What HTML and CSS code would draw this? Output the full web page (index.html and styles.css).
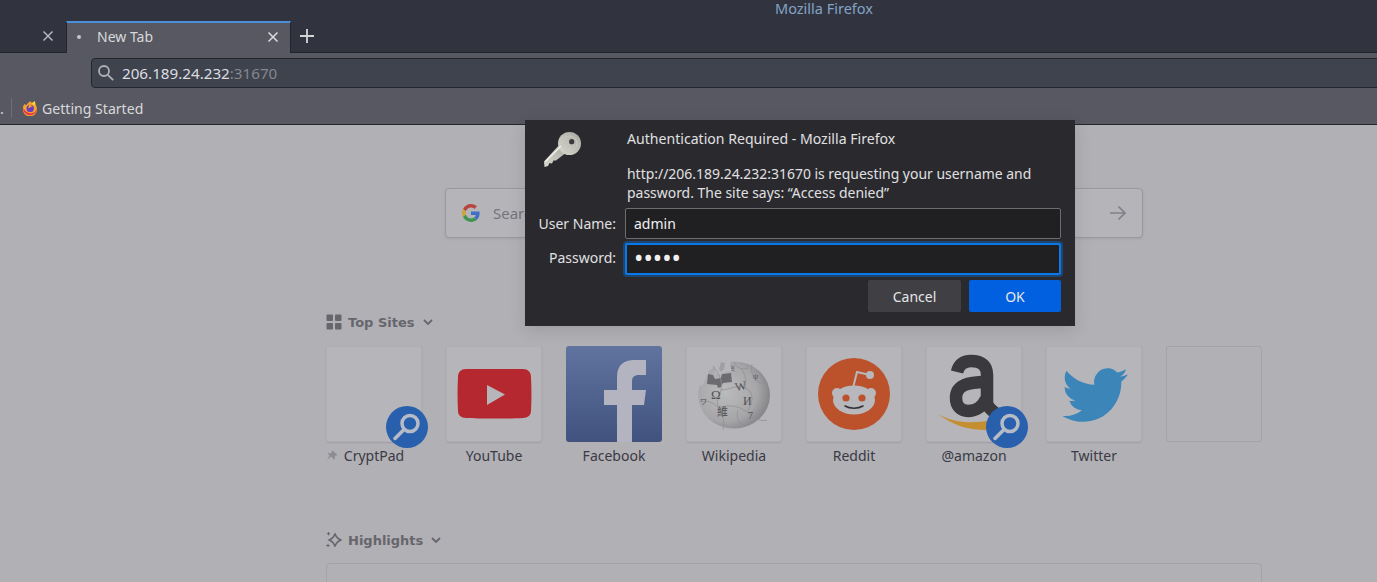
FILE: index.html
```html
<!DOCTYPE html>
<html lang="en">
<head>
<meta charset="utf-8">
<title>Mozilla Firefox</title>
<link rel="stylesheet" href="styles.css">
</head>
<body>
<div class="chrome">
  <div class="titlebar"><span class="title">Mozilla Firefox</span></div>
  <div class="tabstrip">
    <div class="tab-old">
      <svg class="x" viewBox="0 0 12 12"><path d="M1.500 1.500l9 9M10.500 1.500l-9 9"/></svg>
    </div>
    <div class="tab-active">
      <span class="tab-dot"></span>
      <span class="tab-label">New Tab</span>
      <svg class="x x-light" viewBox="0 0 12 12"><path d="M1.500 1.500l9 9M10.500 1.500l-9 9"/></svg>
    </div>
    <svg class="plus" viewBox="0 0 14 14"><path d="M7 0v14M0 7h14"/></svg>
  </div>
  <div class="navbar">
    <div class="urlbar">
      <svg class="url-search" viewBox="0 0 16 16"><circle cx="6" cy="6" r="5"/><path d="M9.800 9.800l5.400 5.400"/></svg>
      <span class="url-host">206.189.24.232</span><span class="url-port">:31670</span>
    </div>
  </div>
  <div class="bookmarks">
    <span class="bm-more">.</span>
    <span class="bm-sep"></span>
    <svg class="ff-icon" viewBox="0 0 16 16">
      <path d="M8 1.200c1.200.4 1.500 1.300 1.800 1.800 1-.3 2.200-.8 2.400-2 .8 1 1.200 2.200 1.100 3 .9 1.200 1.500 2.500 1.500 4.200A7 7 0 1 1 1 8.200c0-1.600.5-3 1.500-4.100C3 4.800 3.700 5 4.500 5 5.200 3.500 6.500 2.800 8 1.200z" fill="#f7a327"/>
      <path d="M1 8.200a7 7 0 0 0 14 0c-.6 2.500-2.300 5-6 5-3.500 0-5.500-2-8-5z" fill="#e8344e"/>
      <path d="M12.200 1c.8 1 1.200 2.200 1.100 3l-1.500 1.500-2-2.500c1-.3 2.200-.8 2.400-2z" fill="#ffd83a"/>
      <circle cx="8.200" cy="8.400" r="3.700" fill="#6a3cc4"/>
      <path d="M6.500 5.200c1.800-.6 3.400.2 4.200 1.400-1 .1-2 .3-2.500 1-.4.5-1.200.6-2 .3.600-.8.600-1.700.3-2.700z" fill="#f7a327"/>
    </svg>
    <span class="bm-label">Getting Started</span>
  </div>
</div>

<main class="page">
  <div class="search">
    <svg class="g-icon" viewBox="0 0 48 48">
      <path fill="#b7453b" d="M24 9.500c3.900 0 6.900 1.600 9.100 3.600l6.800-6.800C35.900 2.500 30.500 0 24 0 14.600 0 6.500 5.400 2.600 13.200l7.900 6.200C12.400 13.600 17.700 9.500 24 9.500z"/>
      <path fill="#3f6fc4" d="M46.900 24.500c0-1.600-.1-3.100-.4-4.500H24v9h12.900c-.6 3-2.200 5.500-4.800 7.200l7.700 6C44.300 37.900 46.900 31.800 46.900 24.500z"/>
      <path fill="#cda33a" d="M10.500 28.600c-.5-1.400-.8-3-.8-4.600s.3-3.200.8-4.600l-7.900-6.200C.9 16.500 0 20.100 0 24s.9 7.500 2.600 10.800l7.900-6.200z"/>
      <path fill="#3f9450" d="M24 48c6.500 0 11.900-2.100 15.800-5.800l-7.700-6c-2.100 1.400-4.900 2.300-8.100 2.300-6.300 0-11.600-4.100-13.500-9.900l-7.900 6.200C6.500 42.600 14.600 48 24 48z"/>
    </svg>
    <span class="search-text">Search</span>
    <svg class="arrow" viewBox="0 0 18 16"><path d="M1 8h15M9.500 1.500L16 8l-6.500 6.500"/></svg>
  </div>

  <div class="section-head head-top">
    <svg class="head-icon" viewBox="0 0 16 16"><rect x="0.500" y="0.500" width="6.500" height="6.500" rx="1"/><rect x="9" y="0.500" width="6.500" height="6.500" rx="1"/><rect x="0.500" y="9" width="6.500" height="6.500" rx="1"/><rect x="9" y="9" width="6.500" height="6.500" rx="1"/></svg>
    <span class="head-label">Top Sites</span>
    <svg class="chev" viewBox="0 0 10 6"><path d="M1 1l4 4 4-4"/></svg>
  </div>

  <div class="sites">
    <div class="site">
      <div class="tile">
        <svg class="badge" viewBox="0 0 42 42"><circle cx="21" cy="21" r="21" fill="#2860ae"/><circle cx="24" cy="17.500" r="8" fill="none" stroke="#b7bbc6" stroke-width="3.500"/><path d="M18 23.500L9 32.500" stroke="#b7bbc6" stroke-width="3.500" stroke-linecap="round"/></svg>
      </div>
      <div class="site-label"><svg class="pin" viewBox="0 0 12 12"><path d="M6.500.5l5 4.500-2.500 1-.5 4-3.500-3.500L1 10l2.500-4.500L1.500 3l3.500.2z"/></svg>CryptPad</div>
    </div>
    <div class="site">
      <div class="tile">
        <svg class="tile-art" viewBox="0 0 96 96">
          <path d="M20 23h57c5 0 8 3 8 8 .6 12 .6 22 0 34 0 4-3 7-8 7-17 .8-43 .8-57 0-5 0-8-3-8-7-.6-12-.6-22 0-34 0-5 3-8 8-8z" fill="#b6282f"/>
          <path d="M41 39l18 9.500L41 59z" fill="#b6b5ba"/>
        </svg>
      </div>
      <div class="site-label">YouTube</div>
    </div>
    <div class="site">
      <div class="tile tile-fb">
        <svg class="tile-art" viewBox="0 0 96 96">
          <path d="M51 96V59H38V44h13V31c0-12 7-17 17-17h12v15h-7c-5 0-7 2-7 7v8h14l-2 15H66v37z" fill="#b3b4c0"/>
        </svg>
      </div>
      <div class="site-label">Facebook</div>
    </div>
    <div class="site">
      <div class="tile">
        <svg class="tile-art" viewBox="0 0 96 96">
          <defs>
            <radialGradient id="globe" cx="0.380" cy="0.450" r="0.680">
              <stop offset="0" stop-color="#bbbbbd"/><stop offset="0.650" stop-color="#a6a6a9"/><stop offset="1" stop-color="#7c7c80"/>
            </radialGradient>
          </defs>
          <ellipse cx="48" cy="49" rx="36" ry="33.500" fill="url(#globe)"/>
          <path d="M29 12h15l1 13-6 1-2 3-8-1z" fill="#b6b5ba"/>
          <path d="M12 38l6-14 5 2-4 8-3 6z" fill="#b6b5ba"/>
          <path d="M35 16l4 1-1 6-3 3-2-3z" fill="#a0a0a3"/>
          <path d="M22 28l5 1 2 4 6-1 1-4 9-1 1 9-9 1-2 4-3 1-1-3-10-1z" fill="#6c6c70"/>
          <g class="puzzle"><path d="M27 20c6 8 10 14 8 24s-6 10-2 18 6 14 4 22M33 62c10-4 20-2 28 4s12 10 20 8M35 44c10 0 14-6 24-2s8 14 2 24M59 42c2-8 0-14-4-20M48 16c2 6 8 8 14 6M66 18c-2 10 2 16 10 20M15 56c6-2 12 0 18 6M52 64c-2 6 0 12 4 15"/></g>
          <text class="glyph" x="25" y="53" font-size="13">Ω</text>
          <text class="glyph" x="49" y="44" font-size="12" transform="rotate(-12 56 40)">W</text>
          <text class="glyph" x="57" y="59" font-size="12">И</text>
          <text class="glyph" x="31" y="70" font-size="11">維</text>
          <text class="glyph" x="62" y="73" font-size="10">7</text>
          <text class="glyph" x="67" y="33" font-size="8">ψ</text>
          <text class="glyph" x="45" y="25" font-size="7">ই</text>
          <text class="glyph" x="14" y="58" font-size="7">ワ</text>
        </svg>
      </div>
      <div class="site-label">Wikipedia</div>
    </div>
    <div class="site">
      <div class="tile">
        <svg class="tile-art" viewBox="0 0 96 96">
          <circle cx="48" cy="48" r="36" fill="#bc522b"/>
          <path d="M47 42l4-16 13 3" fill="none" stroke="#b7b7bc" stroke-width="2"/>
          <circle cx="64" cy="29" r="4" fill="#b7b7bc"/>
          <circle cx="31" cy="47" r="5" fill="#b7b7bc"/>
          <circle cx="65" cy="47" r="5" fill="#b7b7bc"/>
          <ellipse cx="48" cy="54" rx="21" ry="14.500" fill="#b7b7bc"/>
          <circle cx="40" cy="52" r="3.600" fill="#bc522b"/>
          <circle cx="56" cy="52" r="3.600" fill="#bc522b"/>
          <path d="M39 60c5 3 13 3 18 0" fill="none" stroke="#333338" stroke-width="1.600" stroke-linecap="round"/>
        </svg>
      </div>
      <div class="site-label">Reddit</div>
    </div>
    <div class="site">
      <div class="tile">
        <svg class="tile-art" viewBox="0 0 96 96">
          <path d="M12 68c14 11 32 17 52 16l8-4-3-7c-18 5-40 5-57-5z" fill="#c48f30"/>
          <path d="M31 26c2-8 7-11 14-11 11 0 16 5 16 14v27c0 4 3 7 8 11" fill="none" stroke="#3a3a3e" stroke-width="12.500"/>
          <path d="M60 36c-18 0-30 3-30 16 0 8 5 13 12 13 8 0 15-5 18-12" fill="none" stroke="#3a3a3e" stroke-width="12.500"/>
        </svg>
        <svg class="badge" viewBox="0 0 42 42"><circle cx="21" cy="21" r="21" fill="#2860ae"/><circle cx="24" cy="17.500" r="8" fill="none" stroke="#b7bbc6" stroke-width="3.500"/><path d="M18 23.500L9 32.500" stroke="#b7bbc6" stroke-width="3.500" stroke-linecap="round"/></svg>
      </div>
      <div class="site-label">@amazon</div>
    </div>
    <div class="site">
      <div class="tile">
        <svg class="tile-bird" viewBox="0 0 24 24"><path fill="#3b85b9" d="M23.953 4.570a10 10 0 0 1-2.825.775 4.958 4.958 0 0 0 2.163-2.723c-.951.555-2.005.959-3.127 1.184a4.920 4.920 0 0 0-8.384 4.482C7.690 8.095 4.067 6.130 1.640 3.162a4.822 4.822 0 0 0-.666 2.475c0 1.710.870 3.213 2.188 4.096a4.904 4.904 0 0 1-2.228-.616v.060a4.923 4.923 0 0 0 3.946 4.827 4.996 4.996 0 0 1-2.212.085 4.936 4.936 0 0 0 4.604 3.417 9.867 9.867 0 0 1-6.102 2.105c-.390 0-.779-.023-1.170-.067a13.995 13.995 0 0 0 7.557 2.209c9.053 0 13.998-7.496 13.998-13.985 0-.210 0-.420-.015-.630A9.935 9.935 0 0 0 24 4.590z"/></svg>
      </div>
      <div class="site-label">Twitter</div>
    </div>
    <div class="site">
      <div class="tile tile-empty"></div>
    </div>
  </div>

  <div class="section-head head-high">
    <svg class="head-icon" viewBox="0 0 16 16"><path class="spark" d="M9 1.500c.7 3.300 2 4.700 5.800 6.500-3.800 1.800-5.100 3.200-5.800 6.500-.7-3.300-2-4.700-5.800-6.500C7 6.200 8.300 4.800 9 1.500z"/><path class="spark-dot" d="M2.500 0v3.400M.8 1.700h3.400M2 11.800v3.400M.3 13.500h3.400"/></svg>
    <span class="head-label">Highlights</span>
    <svg class="chev" viewBox="0 0 10 6"><path d="M1 1l4 4 4-4"/></svg>
  </div>
  <div class="highlights"></div>
</main>

<div class="dialog">
  <svg class="key" viewBox="0 0 40 38">
    <defs><linearGradient id="keyfill" x1="0" y1="1" x2="1" y2="0"><stop offset="0" stop-color="#d8d8cf"/><stop offset="1" stop-color="#a9a9a1"/></linearGradient></defs>
    <path d="M17 12L1 29.500l.5 5.500 3.500-1 1.500-3 2.500.5 1.500-3 2.500 0L24 20z" fill="url(#keyfill)"/>
    <circle cx="26.500" cy="11.500" r="11.500" fill="url(#keyfill)"/>
    <circle cx="26.500" cy="11.500" r="7.500" fill="none" stroke="#c9c9c1" stroke-width="1"/>
    <circle cx="28.700" cy="9.700" r="2.600" fill="#3a3a3c"/>
    <path d="M2.500 29.500L18 14" stroke="#f0f0ea" stroke-width="1.500" fill="none"/>
  </svg>
  <div class="dialog-title">Authentication Required - Mozilla Firefox</div>
  <div class="dialog-msg">http://206.189.24.232:31670 is requesting your username and<br>password. The site says: “Access denied”</div>
  <div class="field field-user">
    <label class="field-label" for="user">User Name:</label>
    <input class="field-input" id="user" type="text" value="admin">
  </div>
  <div class="field field-pass">
    <label class="field-label label-pass" for="pass">Password:</label>
    <input class="field-input field-focus" id="pass" type="password" value="admin">
  </div>
  <div class="dialog-actions">
    <button class="btn btn-cancel">Cancel</button>
    <button class="btn btn-ok">OK</button>
  </div>
</div>
</body>
</html>
```

FILE: styles.css
```css
* { box-sizing: border-box; }
html, body { margin: 0; padding: 0; }
body {
  width: 1377px;
  height: 582px;
  overflow: hidden;
  position: relative;
  background: #b1b0b5;
  font-family: "Noto Sans", sans-serif;
}

/* browser chrome */
.chrome { background: #575862; border-bottom: 1px solid #23252d; height: 125px; }
.titlebar {
  height: 21px;
  background: #31343e;
  display: flex;
  align-items: center;
  padding-left: 775px;
  padding-bottom: 5px;
}
.title { font-size: 14.500px; line-height: 16px; color: #84a3c6; }
.tabstrip {
  height: 32px;
  background: #31343e;
  display: flex;
  align-items: center;
  box-shadow: inset 0 -1px 0 #22242b;
}
.tab-old { width: 66px; display: flex; justify-content: flex-end; padding-right: 12px; margin-bottom: 3px; }
.x { width: 12px; height: 12px; fill: none; stroke: #b4b7be; stroke-width: 1.500; }
.x-light { stroke: #dcdde0; margin-bottom: 3px; }
.tab-active {
  width: 225px;
  height: 32px;
  background: #575862;
  border-top: 2px solid #4a90d9;
  border-left: 1px solid #22242b;
  border-right: 1px solid #22242b;
  display: flex;
  align-items: center;
  padding: 0 11px 0 10px;
}
.tab-dot { width: 4px; height: 4px; border-radius: 50%; background: #c6c7cb; margin: 0 16px 2px 0; }
.tab-label { flex: 1; font-size: 14px; color: #d7d8db; padding-bottom: 4px; }
.plus { width: 14px; height: 14px; margin: 0 0 3px 9px; fill: none; stroke: #d3d5d9; stroke-width: 1.800; }
.navbar { height: 39px; padding: 5px 0 4px 91px; }
.urlbar {
  height: 30px;
  margin-right: -20px;
  background: #3f434e;
  border: 1px solid #24262d;
  border-radius: 4px;
  display: flex;
  align-items: center;
  padding-left: 6px;
  font-size: 15.200px;
}
.url-search { width: 16px; height: 16px; margin-right: 8px; fill: none; stroke: #aeb0b6; stroke-width: 1.800; }
.url-host { color: #dcdde0; }
.url-port { color: #85878f; }
.bookmarks { height: 32px; display: flex; align-items: center; font-size: 14.100px; color: #d7d8db; }
.bm-more { width: 11px; color: #d7d8db; }
.bm-sep { width: 1px; height: 20px; background: #6d6e78; margin-right: 10px; }
.ff-icon { width: 16px; height: 16px; margin-right: 4px; }
.bm-label { color: #d7d8db; }

/* new tab page */
.page { padding-top: 63px; }
.search {
  width: 698px;
  height: 50px;
  margin-left: 445px;
  display: flex;
  align-items: center;
  padding-left: 16px;
  border: 1px solid #9a999f;
  border-radius: 4px;
  background: #b5b4b9;
  box-shadow: 0 1px 3px rgba(0,0,0,.08);
}
.g-icon { width: 18px; height: 18px; margin-right: 13px; }
.search-text { flex: 1; font-size: 15px; color: #74747c; }
.arrow { width: 18px; height: 16px; margin-right: 15px; fill: none; stroke: #807f86; stroke-width: 1.600; }
.section-head { display: flex; align-items: center; margin-left: 326px; height: 18px; }
.head-top { margin-top: 75px; }
.head-high { margin-top: 66px; }
.head-icon { width: 16px; height: 16px; margin-right: 6px; fill: #66666c; }
.spark { fill: none; stroke: #66666c; stroke-width: 1.500; }
.spark-dot { fill: none; stroke: #66666c; stroke-width: 1; }
.head-label { font-family: "DejaVu Sans", sans-serif; font-weight: 700; font-size: 13px; color: #66666c; }
.chev { width: 10px; height: 6px; margin-left: 8px; fill: none; stroke: #66666c; stroke-width: 1.800; }
.sites { display: flex; gap: 24px; margin: 15px 0 0 326px; }
.site { width: 96px; }
.tile {
  position: relative;
  width: 96px;
  height: 96px;
  border-radius: 3px;
  background: #b6b5ba;
  box-shadow: inset 0 0 0 1px rgba(60,60,70,.05), 0 1px 2px rgba(0,0,0,.1);
}
.tile-fb { background: linear-gradient(#60749f, #41527f); overflow: hidden; box-shadow: none; }
.tile-empty { background: transparent; box-shadow: none; border: 1px solid #a3a2a9; }
.tile-art { display: block; width: 96px; height: 96px; }
.tile-bird { position: absolute; left: 16px; top: 16px; width: 66px; height: 66px; }
.badge { position: absolute; left: 60px; top: 60px; width: 42px; height: 42px; }
.puzzle path { fill: none; stroke: #909094; stroke-width: .8; }
.glyph { font-family: "Liberation Serif", "Noto Sans CJK SC", serif; fill: #505054; }
.site-label {
  position: relative;
  margin-top: 4px;
  text-align: center;
  font-size: 14px;
  line-height: 19px;
  color: #3a3a44;
}
.pin { position: absolute; left: 0; top: 4px; width: 12px; height: 12px; fill: #8d8c92; }
.highlights {
  width: 936px;
  height: 40px;
  margin: 14px 0 0 326px;
  border: 1px solid #a3a2a9;
  border-radius: 4px;
}

/* auth dialog */
.dialog {
  position: absolute;
  left: 525px;
  top: 120px;
  width: 550px;
  height: 206px;
  background: #2a2a2e;
  color: #e0e0e2;
  box-shadow: 0 4px 16px rgba(0,0,0,.12);
  font-size: 14px;
  padding: 9px 14px 0 0;
}
.key { position: absolute; left: 18px; top: 12px; width: 40px; height: 38px; }
.dialog-title { margin-left: 102px; line-height: 20px; font-size: 14.100px; }
.dialog-msg { margin: 15px 0 0 102px; line-height: 19px; font-size: 13.950px; }
.field { display: flex; align-items: center; }
.field-user { margin-top: 6px; height: 31px; }
.field-pass { margin-top: 4px; height: 32px; }
.field-label { width: 91px; text-align: right; flex: none; }
.label-pass { margin-bottom: 4px; }
.field-input {
  flex: none;
  width: 436px;
  height: 100%;
  margin-left: 9px;
  padding: 0 8px;
  background: #202023;
  color: #f0f0f2;
  border: 1px solid #6b6b70;
  border-radius: 2px;
  font: inherit;
  outline: none;
}
.field-focus {
  border: 2px solid #0a78e8;
  box-shadow: 0 0 0 2px rgba(10,120,232,.35);
  padding: 0 7px 4px;
  font-size: 25px;
}
.dialog-actions { display: flex; justify-content: flex-end; gap: 8px; margin-top: 5px; }
.btn {
  height: 32px;
  border: 0;
  border-radius: 2px;
  font: inherit;
  color: #e6e6e8;
}
.btn-cancel { width: 93px; background: #3f3f44; }
.btn-ok { width: 92px; background: #0060df; }
```
